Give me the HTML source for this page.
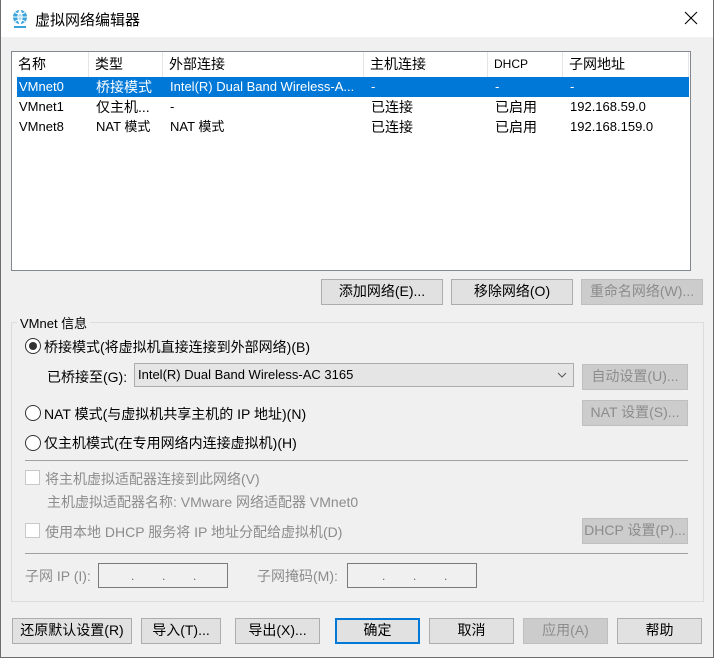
<!DOCTYPE html>
<html><head><meta charset="utf-8"><style>
*{box-sizing:border-box;margin:0;padding:0}
body{width:714px;height:658px;background:#f0f0f0;font-family:"Liberation Sans","Noto Sans CJK SC",sans-serif;font-size:13px;color:#000;position:relative;overflow:hidden}
.a{position:absolute;white-space:nowrap}
.win{position:absolute;left:0;top:0;width:714px;height:658px;border:1px solid #6d6d6d;border-top:none}
.title{position:absolute;left:1px;top:0;width:712px;height:37px;background:#fff}
.btn{position:absolute;height:26px;background:#e1e1e1;border:1px solid #adadad;text-align:center;line-height:23px;font-size:14px}
.dis{color:#8c8c8c;background:#cccccc;border-color:#bfbfbf}
.gray{color:#8c8c8c}
.list{position:absolute;left:11px;top:51px;width:680px;height:220px;background:#fff;border:1px solid #828790}
.hd{position:absolute;top:0;height:25px;line-height:24px;font-size:14px;padding-left:6px;border-right:1px solid #e5e5e5}
.row{position:absolute;left:5px;width:672px;height:20px;line-height:20px;font-size:13px}
.row span{position:absolute}
.radio{position:absolute;width:16px;height:16px;border:1px solid #333;border-radius:50%;background:#fff}
.cb{position:absolute;width:15px;height:15px;border:1px solid #c8c8c8;background:#fff}
.line{position:absolute;height:1px;background:#a0a0a0}
.box{position:absolute;height:25px;border:1px solid #7a7a7a;background:#f0f0f0;color:#6d6d6d;font-size:12px}
</style></head><body>
<div class="win"></div>
<div class="title"></div>
<svg class="a" style="left:11px;top:9px" width="18" height="20" viewBox="0 0 18 20"><circle cx="9" cy="8" r="7" fill="#3aa3d8"/><path d="M2 8h14M9 1v14M4 3.5q5 3 10 0M4 12.5q5-3 10 0M9 1q-4 7 0 14M9 1q4 7 0 14" stroke="#fff" stroke-width="1.1" fill="none"/><rect x="3" y="17" width="12" height="2" fill="#3aa3d8"/></svg>
<div class="a" style="left:35px;top:9px;font-size:15px">虚拟网络编辑器</div>
<svg class="a" style="left:684px;top:11px" width="14" height="14"><path d="M1 1L13 13M13 1L1 13" stroke="#000" stroke-width="1.1"/></svg>

<div class="list">
<div class="hd" style="left:0;width:77px">名称</div>
<div class="hd" style="left:77px;width:74px">类型</div>
<div class="hd" style="left:151px;width:201px">外部连接</div>
<div class="hd" style="left:352px;width:124px">主机连接</div>
<div class="hd" style="left:476px;width:75px;font-size:12px">DHCP</div>
<div class="hd" style="left:551px;width:126px">子网地址</div>
<div class="row" style="top:25px;background:#0078d7;color:#fff"><span style="left:2px">VMnet0</span><span style="left:79px;font-size:14px">桥接模式</span><span style="left:153px">Intel(R) Dual Band Wireless-A...</span><span style="left:354px">-</span><span style="left:478px">-</span><span style="left:553px">-</span></div>
<div class="row" style="top:45px"><span style="left:2px">VMnet1</span><span style="left:79px;font-size:14px">仅主机...</span><span style="left:153px">-</span><span style="left:354px;font-size:14px">已连接</span><span style="left:478px;font-size:14px">已启用</span><span style="left:553px">192.168.59.0</span></div>
<div class="row" style="top:65px"><span style="left:2px">VMnet8</span><span style="left:79px">NAT 模式</span><span style="left:153px">NAT 模式</span><span style="left:354px;font-size:14px">已连接</span><span style="left:478px;font-size:14px">已启用</span><span style="left:553px">192.168.159.0</span></div>
</div>

<div class="btn" style="left:321px;top:279px;width:122px">添加网络(E)...</div>
<div class="btn" style="left:451px;top:279px;width:122px">移除网络(O)</div>
<div class="btn dis" style="left:581px;top:279px;width:122px">重命名网络(W)...</div>

<div class="a" style="left:11px;top:322px;width:693px;height:280px;border:1px solid #dcdcdc"></div>
<div class="a" style="left:17px;top:313px;background:#f0f0f0;padding:0 3px;font-size:13px">VMnet 信息</div>

<div class="radio" style="left:25px;top:338px"><div style="position:absolute;left:3px;top:3px;width:8px;height:8px;border-radius:50%;background:#333"></div></div>
<div class="a" style="left:44px;top:337px;font-size:14px">桥接模式(将虚拟机直接连接到外部网络)(B)</div>
<div class="a" style="left:47px;top:367px;font-size:14px">已桥接至(G):</div>
<div class="a" style="left:134px;top:363px;width:440px;height:24px;background:#e5e5e5;border:1px solid #acacac;line-height:22px;padding-left:3px;font-size:13px">Intel(R) Dual Band Wireless-AC 3165<svg style="position:absolute;right:6px;top:8px" width="10" height="6"><path d="M1 1L5 5L9 1" stroke="#555" fill="none"/></svg></div>
<div class="btn dis" style="left:582px;top:364px;width:106px">自动设置(U)...</div>

<div class="radio" style="left:25px;top:405px"></div>
<div class="a" style="left:44px;top:404px;font-size:14px">NAT 模式(与虚拟机共享主机的 IP 地址)(N)</div>
<div class="btn dis" style="left:582px;top:400px;width:106px">NAT 设置(S)...</div>

<div class="radio" style="left:25px;top:435px"></div>
<div class="a" style="left:44px;top:433px;font-size:14px">仅主机模式(在专用网络内连接虚拟机)(H)</div>

<div class="line" style="left:25px;top:460px;width:663px"></div>
<div class="cb" style="left:25px;top:470px"></div>
<div class="a gray" style="left:45px;top:469px;font-size:14px">将主机虚拟适配器连接到此网络(V)</div>
<div class="a gray" style="left:47px;top:492px;font-size:14px">主机虚拟适配器名称: VMware 网络适配器 VMnet0</div>
<div class="cb" style="left:25px;top:523px"></div>
<div class="a gray" style="left:45px;top:522px;font-size:14px">使用本地 DHCP 服务将 IP 地址分配给虚拟机(D)</div>
<div class="btn dis" style="left:582px;top:518px;width:106px">DHCP 设置(P)...</div>
<div class="line" style="left:25px;top:553px;width:663px"></div>

<div class="a gray" style="left:25px;top:566px;font-size:14px">子网 IP (I):</div>
<div class="box" style="left:98px;top:563px;width:130px"><span class="a" style="left:32px;top:5px">.</span><span class="a" style="left:63px;top:5px">.</span><span class="a" style="left:94px;top:5px">.</span></div>
<div class="a gray" style="left:257px;top:566px;font-size:14px">子网掩码(M):</div>
<div class="box" style="left:347px;top:563px;width:130px"><span class="a" style="left:34px;top:5px">.</span><span class="a" style="left:65px;top:5px">.</span><span class="a" style="left:96px;top:5px">.</span></div>

<div class="btn" style="left:12px;top:618px;width:120px">还原默认设置(R)</div>
<div class="btn" style="left:141px;top:618px;width:80px">导入(T)...</div>
<div class="btn" style="left:235px;top:618px;width:85px">导出(X)...</div>
<div class="btn" style="left:335px;top:618px;width:85px;border:2px solid #0078d7;line-height:21px">确定</div>
<div class="btn" style="left:429px;top:618px;width:85px">取消</div>
<div class="btn dis" style="left:523px;top:618px;width:85px">应用(A)</div>
<div class="btn" style="left:617px;top:618px;width:85px">帮助</div>
</body></html>
